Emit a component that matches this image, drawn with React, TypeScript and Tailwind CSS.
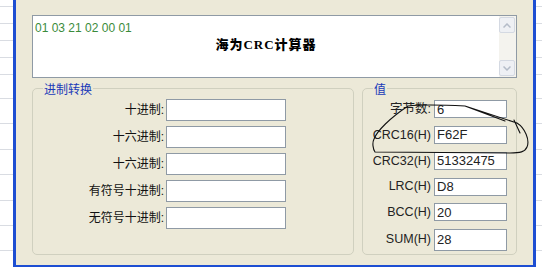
import React from "react";

const stripLines = [
    "h-[7px]",
    "h-[17px]",
    "h-[17px]",
    "h-[17px]",
    "h-[17px]",
    "h-[24px]",
    "h-[25px]",
    "h-[26px]",
    "h-[25px]",
    "h-[26px]",
    "h-[25px]",
    "h-[25px]",
];

const convRows = ["十进制:", "十六进制:", "十六进制:", "有符号十进制:", "无符号十进制:"];

const valueRows = [
    { label: "字节数:", value: "6", h: "h-[18px]" },
    { label: "CRC16(H)", value: "F62F", h: "h-[18px]" },
    { label: "CRC32(H)", value: "51332475", h: "h-[18px]" },
    { label: "LRC(H)", value: "D8", h: "h-[18px]" },
    { label: "BCC(H)", value: "20", h: "h-[18px]" },
    { label: "SUM(H)", value: "28", h: "h-[22px]" },
];

function Strip({ width }: { width: string }) {
    return (
        <div className={`${width} h-full bg-white flex flex-col`}>
            {stripLines.map((h, i) => (
                <div key={i} className={`${h} shrink-0 border-b border-[#d9dce2]`} />
            ))}
        </div>
    );
}

function App() {
    return (
        <div
            className="relative w-[542px] h-[267px] overflow-hidden bg-white flex"
            style={{ fontFamily: '"Liberation Sans", "Noto Sans CJK SC", sans-serif' }}
        >
            <Strip width="w-[13px]" />

            {/* window */}
            <div className="w-[523px] h-[267px] border-l-[3px] border-r-[3px] border-b-[2px] border-[#1d4ed2] bg-[#ECE9D8] flex flex-col px-[16px] pt-[15px]">
                {/* text area */}
                <div className="h-[63px] border border-[#8f9aa5] bg-white flex">
                    <div className="flex-1 relative">
                        <div className="pl-[2px] pt-[5px] text-[12px] leading-[14px] text-[#3b8b3b]">
                            01 03 21 02 00 01
                        </div>
                        <div
                            className="mt-[3px] text-center font-black text-[13px] leading-[14px] tracking-[1px] text-black"
                            style={{ fontFamily: '"Liberation Serif", "Noto Sans CJK SC", serif' }}
                        >
                            海为CRC计算器
                        </div>
                    </div>
                    {/* scrollbar */}
                    <div className="w-[17px] bg-[#f4f3ee] flex flex-col justify-between py-[1px] pr-[1px]">
                        <div className="h-[16px] rounded-[2px] border border-[#d4d9e2] bg-[#eef0f4] flex items-center justify-center">
                            <svg width="8" height="5" viewBox="0 0 8 5">
                                <path d="M0.5 4.5 L4 1 L7.5 4.5" fill="none" stroke="#b4bcc8" strokeWidth="1.5" />
                            </svg>
                        </div>
                        <div className="h-[16px] rounded-[2px] border border-[#d4d9e2] bg-[#eef0f4] flex items-center justify-center">
                            <svg width="8" height="5" viewBox="0 0 8 5">
                                <path d="M0.5 0.5 L4 4 L7.5 0.5" fill="none" stroke="#b4bcc8" strokeWidth="1.5" />
                            </svg>
                        </div>
                    </div>
                </div>

                {/* group boxes */}
                <div className="mt-[10px] flex gap-[8px]">
                    <div className="relative w-[322px] h-[167px] border border-[#d0d0bf] rounded-[5px] pt-[10px]">
                        <span className="absolute -top-[6px] left-[10px] px-[1px] bg-[#ECE9D8] text-[12px] leading-[14px] text-[#1a3ab8]">
                            进制转换
                        </span>
                        <div className="flex flex-col gap-[5px]">
                            {convRows.map((label, i) => (
                                <div key={i} className="flex items-center">
                                    <span className="w-[131px] text-right text-[12px] text-[#111]">{label}</span>
                                    <div className="ml-[2px] w-[120px] h-[22px] border border-[#8f9aa5] bg-white" />
                                </div>
                            ))}
                        </div>
                    </div>

                    <div className="relative w-[155px] h-[167px] border border-[#d0d0bf] rounded-[5px] pt-[11px]">
                        <span className="absolute -top-[6px] left-[10px] px-[1px] bg-[#ECE9D8] text-[12px] leading-[14px] text-[#1a3ab8]">
                            值
                        </span>
                        <div className="flex flex-col gap-[7px]">
                            {valueRows.map((row) => (
                                <div key={row.label} className="flex items-center">
                                    <span className="w-[68px] text-right text-[12.5px] text-[#222] whitespace-nowrap">
                                        {row.label}
                                    </span>
                                    <div
                                        className={`ml-[3px] w-[73px] ${row.h} border border-[#8f9aa5] bg-white flex items-center pl-[2px] text-[13px] text-[#222]`}
                                    >
                                        {row.value}
                                    </div>
                                </div>
                            ))}
                        </div>
                    </div>
                </div>
            </div>

            <Strip width="w-[6px]" />

            {/* hand drawn mark */}
            <svg
                className="absolute inset-0 pointer-events-none"
                width="542"
                height="267"
                viewBox="0 0 542 267"
            >
                <path
                    d="M408 106 C425 104 445 105 465 106 L505 121 M465 106 L517 123 C525 128 530 140 527 147 C525 152 520 153 510 153 L375 152 C373 149 372 143 374 139 C377 131 390 118 408 106 M514 120 L520 133"
                    fill="none"
                    stroke="#111"
                    strokeWidth="1.1"
                    strokeLinecap="round"
                    strokeLinejoin="round"
                />
            </svg>
        </div>
    );
}

export default App;
